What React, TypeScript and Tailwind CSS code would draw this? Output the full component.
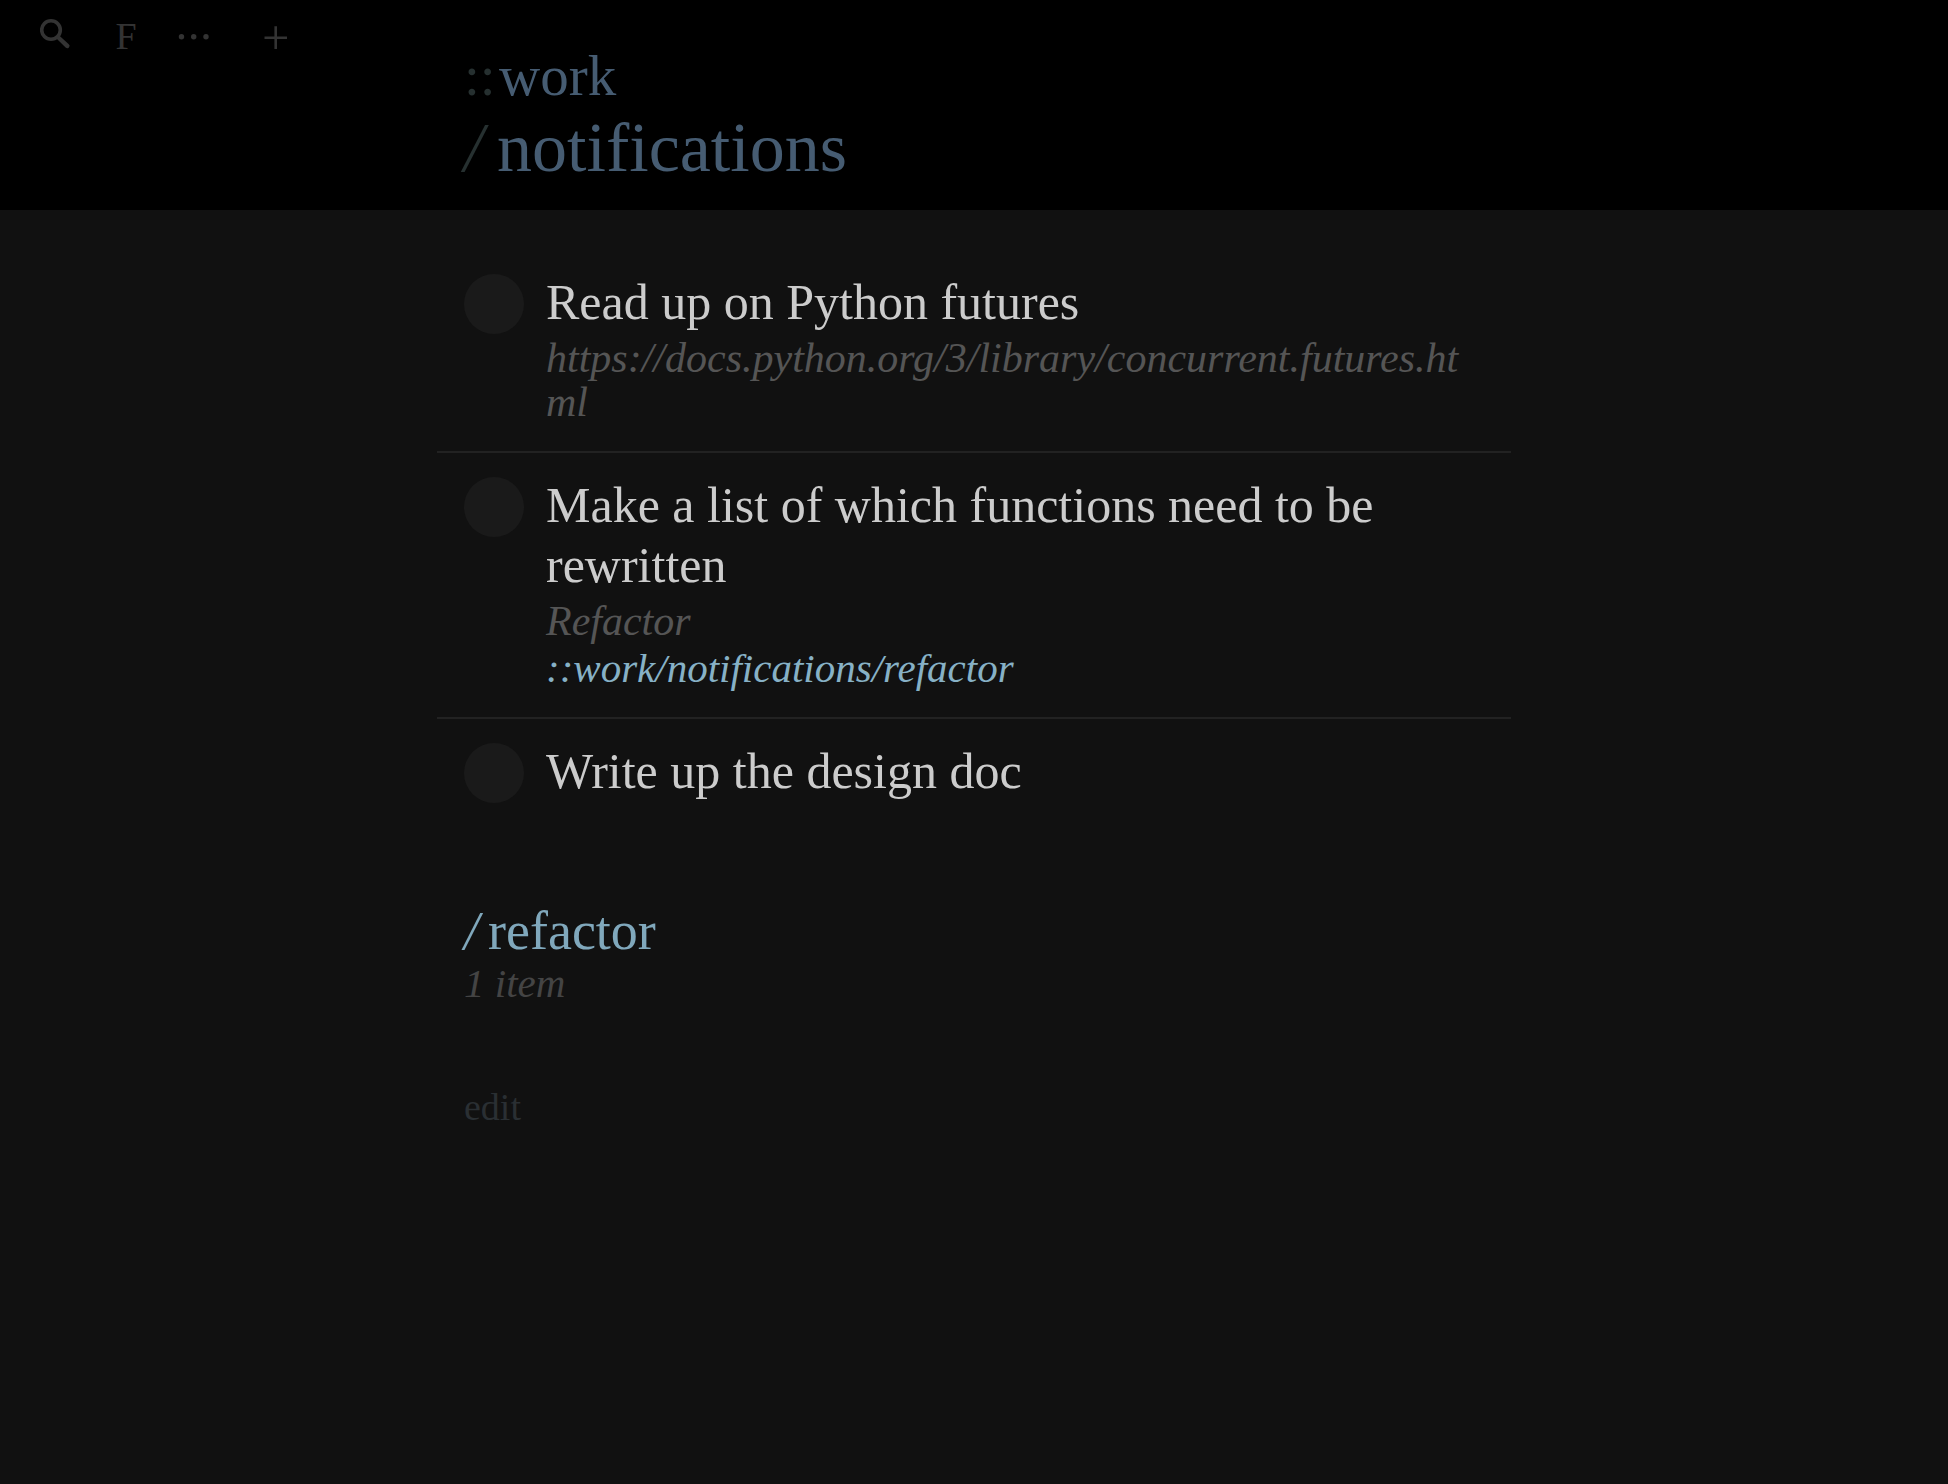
type Item = {
  id: string
  title: string
  note?: string
  path?: string
}

const items: Item[] = [
  {
    id: 'futures',
    title: 'Read up on Python futures',
    note: 'https://docs.python.org/3/library/concurrent.futures.html',
  },
  {
    id: 'functions',
    title: 'Make a list of which functions need to be rewritten',
    note: 'Refactor',
    path: '::work/notifications/refactor',
  },
  { id: 'design', title: 'Write up the design doc' },
]

function SearchIcon() {
  return (
    <svg className="w-8 h-8" viewBox="0 0 32 32" fill="none" aria-hidden="true">
      <circle cx="11" cy="12" r="9.3" stroke="currentColor" strokeWidth="3.6" />
      <path d="M16.2 20.2 L19.2 17.6 L28.8 26.2 A2.3 2.3 0 0 1 25.6 29.6 Z" fill="currentColor" />
    </svg>
  )
}

function MoreIcon() {
  return (
    <svg className="w-8 h-8" viewBox="0 0 32 32" fill="currentColor" aria-hidden="true">
      <circle cx="3.5" cy="18.7" r="2.7" />
      <circle cx="15.7" cy="18.7" r="2.7" />
      <circle cx="28" cy="18.7" r="2.7" />
    </svg>
  )
}

function PlusIcon() {
  return (
    <svg className="w-8 h-8" viewBox="0 0 32 32" stroke="currentColor" strokeWidth="2.6" aria-hidden="true">
      <path d="M4.5 19.7 H27 M15.7 8.3 V31" />
    </svg>
  )
}

function Header() {
  return (
    <header className="bg-black grid grid-cols-[minmax(0,1fr)_minmax(0,1074px)_minmax(0,1fr)]">
      <nav className="flex items-start pl-10 pt-[18px] text-[#333]">
        <button aria-label="Search">
          <SearchIcon />
        </button>
        <button aria-label="Font" className="ml-[42px] w-6 text-[38px] leading-9">
          F
        </button>
        <button aria-label="More" className="ml-10">
          <MoreIcon />
        </button>
        <button aria-label="Add" className="ml-[50px]">
          <PlusIcon />
        </button>
      </nav>

      {/* Current path */}
      <div className="px-[27px] pt-11 pb-[22px] text-[#465c72]">
        <a href="#work" className="block text-[57px] leading-[64px]">
          <span className="inline-block w-[35px] text-[#263030]">::</span>work
        </a>
        <h1 className="text-[70px] leading-[80px]">
          <span className="inline-block w-[33px] italic text-[#263030]">/</span>notifications
        </h1>
      </div>
    </header>
  )
}

function ItemRow({ item }: { item: Item }) {
  return (
    <li className="flex items-start gap-[22px] px-[27px] pt-[22px] pb-[27px] border-b-2 border-[#222] last:border-b-0">
      <input
        id={item.id}
        type="checkbox"
        className="appearance-none shrink-0 mt-0.5 w-[60px] h-[60px] rounded-full bg-[#1a1a1a] checked:bg-[#333]"
      />
      <div className="min-w-0 flex-1">
        <label htmlFor={item.id} className="block text-[50px] leading-[60px] text-[#ccc]">
          {item.title}
        </label>
        {item.note && (
          <p className="mt-1 text-[42px] leading-[44px] italic break-all text-[#555]">{item.note}</p>
        )}
        {item.path && (
          <a href="#refactor" className="block mt-[3px] text-[41px] leading-[44px] italic text-[#87b1c6]">
            {item.path}
          </a>
        )}
      </div>
    </li>
  )
}

export default function App() {
  return (
    <div className="min-h-screen bg-[#111] font-['Liberation_Serif',serif]">
      <Header />

      <main className="max-w-[1074px] mx-auto pt-10">
        <ul>
          {items.map((item) => (
            <ItemRow key={item.id} item={item} />
          ))}
        </ul>

        {/* Nested lists */}
        <section id="refactor" className="px-[27px] pt-[71px]">
          <h2 className="text-[54px] leading-[60px] text-[#80a8bc]">
            <a href="#refactor">
              <span className="inline-block w-6 italic">/</span>refactor
            </a>
          </h2>
          <p className="text-[41px] leading-[44px] italic text-[#444]">1 item</p>
        </section>

        <div className="px-[27px] pt-20 pb-10">
          <button className="text-[38px] leading-[44px] text-[#2a2f33]">edit</button>
        </div>
      </main>
    </div>
  )
}
